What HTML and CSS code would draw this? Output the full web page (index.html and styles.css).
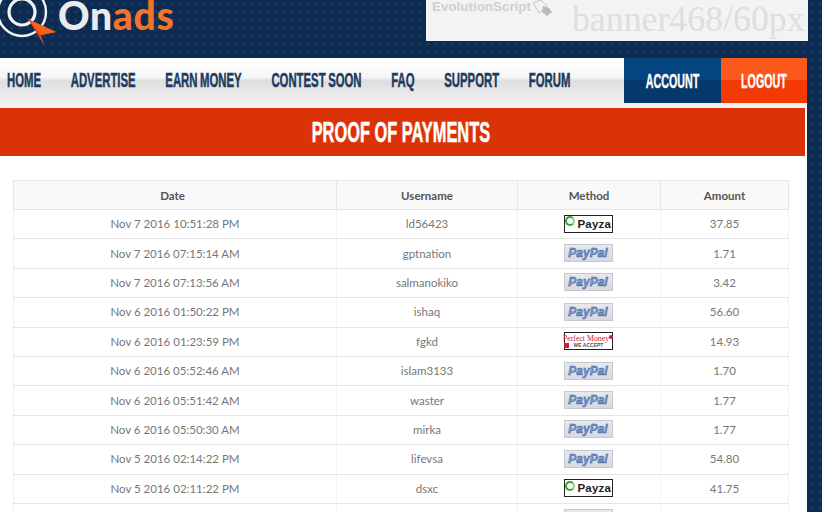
FILE: index.html
```html
<!DOCTYPE html>
<html lang="en">
<head>
<meta charset="utf-8">
<title>Onads - Proof of Payments</title>
<link rel="stylesheet" href="styles.css">
</head>
<body>
<div class="page">
  <header class="top">
    <a class="logo">
      <svg class="logo-mark" width="58" height="46" viewBox="0 0 58 46" aria-hidden="true">
        <circle cx="22" cy="12" r="24" fill="none" stroke="#f1f3f5" stroke-width="2.4"/>
        <circle cx="22" cy="12" r="13" fill="none" stroke="#f1f3f5" stroke-width="3.2"/>
        <path d="M28 19 L56 32 L41 35 L44 45 Z" fill="#e8430f"/>
        <path d="M28 19 L56 32 L41 35 Z" fill="#f8601c"/>
      </svg>
      <span class="logo-text">On<span class="logo-accent">ads</span></span>
    </a>
    <div class="banner">
      <span class="banner-brand">EvolutionScript</span>
      <svg class="banner-icon" width="22" height="18" viewBox="0 0 22 18" aria-hidden="true">
        <path d="M2 3 L10 0 L16 6 L8 13 Z" fill="none" stroke="#c4c4c4" stroke-width="1"/>
        <path d="M12 6 L18 8 L21 12 L16 16 L11 12 Z" fill="#bbbbbb"/>
      </svg>
      <span class="banner-size">banner468/60px</span>
    </div>
  </header>
  <nav class="nav">
    <ul class="nav-links">
      <li>HOME</li>
      <li>ADVERTISE</li>
      <li>EARN MONEY</li>
      <li>CONTEST SOON</li>
      <li>FAQ</li>
      <li>SUPPORT</li>
      <li>FORUM</li>
    </ul>
    <div class="nav-actions">
      <a class="btn btn-account"><span class="squeeze">ACCOUNT</span></a>
      <a class="btn btn-logout"><span class="squeeze">LOGOUT</span></a>
    </div>
  </nav>
  <main class="content">
    <h1 class="title"><span class="squeeze">PROOF OF PAYMENTS</span></h1>
    <div class="table-wrap">
      <table class="pay">
        <colgroup><col class="c1"><col class="c2"><col class="c3"><col class="c4"></colgroup>
        <thead>
          <tr><th class="th-date">Date</th><th>Username</th><th>Method</th><th>Amount</th></tr>
        </thead>
        <tbody>
          <tr><td>Nov 7 2016 10:51:28 PM</td><td>ld56423</td><td><span class="badge payza"><i class="pz-o"></i>Payza</span></td><td>37.85</td></tr>
          <tr><td>Nov 7 2016 07:15:14 AM</td><td>gptnation</td><td><span class="badge paypal">PayPal</span></td><td>1.71</td></tr>
          <tr><td>Nov 7 2016 07:13:56 AM</td><td>salmanokiko</td><td><span class="badge paypal">PayPal</span></td><td>3.42</td></tr>
          <tr><td>Nov 6 2016 01:50:22 PM</td><td>ishaq</td><td><span class="badge paypal">PayPal</span></td><td>56.60</td></tr>
          <tr><td>Nov 6 2016 01:23:59 PM</td><td>fgkd</td><td><span class="badge pm"><span class="pm-name">Perfect Money</span><span class="pm-sub">WE ACCEPT</span></span></td><td>14.93</td></tr>
          <tr><td>Nov 6 2016 05:52:46 AM</td><td>islam3133</td><td><span class="badge paypal">PayPal</span></td><td>1.70</td></tr>
          <tr><td>Nov 6 2016 05:51:42 AM</td><td>waster</td><td><span class="badge paypal">PayPal</span></td><td>1.77</td></tr>
          <tr><td>Nov 6 2016 05:50:30 AM</td><td>mirka</td><td><span class="badge paypal">PayPal</span></td><td>1.77</td></tr>
          <tr><td>Nov 5 2016 02:14:22 PM</td><td>lifevsa</td><td><span class="badge paypal">PayPal</span></td><td>54.80</td></tr>
          <tr><td>Nov 5 2016 02:11:22 PM</td><td>dsxc</td><td><span class="badge payza"><i class="pz-o"></i>Payza</span></td><td>41.75</td></tr>
          <tr><td></td><td></td><td><span class="badge paypal"></span></td><td></td></tr>
        </tbody>
      </table>
    </div>
  </main>
</div>
</body>
</html>
```

FILE: styles.css
```css
html, body {
  margin: 0;
  height: 512px;
  overflow: hidden;
}
body {
  background-color: #0d2b50;
  background-image: radial-gradient(circle at 4px 4px, #15365e 1.6px, transparent 2px);
  background-size: 8px 8px;
  font-family: Lato, "Liberation Sans", sans-serif;
}
.page {
  width: 808px;
  height: 512px;
  overflow: hidden;
}
.top {
  display: flex;
  justify-content: space-between;
  align-items: flex-start;
  height: 58px;
  overflow: hidden;
}
.logo {
  display: flex;
  align-items: flex-start;
  height: 46px;
}
.logo-mark {
  display: block;
}
.logo-text {
  font-family: Lato, sans-serif;
  font-weight: 900;
  font-size: 39px;
  line-height: 30px;
  letter-spacing: 0.7px;
  color: #e9ebed;
}
.logo-accent {
  color: #f4732b;
}
.banner {
  display: flex;
  align-items: flex-start;
  width: 382px;
  height: 41px;
  background: #f3f3f3;
  overflow: hidden;
  box-sizing: border-box;
  padding-left: 6px;
}
.banner-brand {
  font-family: "Liberation Sans", sans-serif;
  font-weight: 700;
  font-size: 13.4px;
  line-height: 14px;
  color: #d0d0d0;
}
.banner-size {
  font-family: "Liberation Serif", serif;
  font-size: 35.8px;
  line-height: 38px;
  color: #dedede;
  margin-left: 19px;
  white-space: nowrap;
}
.nav {
  display: grid;
  grid-template-columns: 624px 183px;
  align-items: start;
  height: 50px;
  width: 807px;
  background: linear-gradient(#ffffff 0, #f6f6f6 38%, #dedede 46%, #e8e8e8 70%, #f3f3f3 100%);
}
.nav-links {
  display: flex;
  gap: 55px;
  margin: 0;
  padding: 0 0 0 13px;
  list-style: none;
  white-space: nowrap;
  transform: scaleX(0.54);
  transform-origin: 0 0;
  font-family: "Liberation Sans", sans-serif;
  font-weight: 700;
  font-size: 21px;
  line-height: 44px;
  word-spacing: -1px;
  -webkit-text-stroke: 0.5px #1d3a60;
  color: #1d3a60;
}
.nav-links li {
  flex: none;
}
.nav-actions {
  display: flex;
}
.btn {
  display: flex;
  justify-content: center;
  height: 45px;
  font-family: "Liberation Sans", sans-serif;
  font-weight: 700;
  font-size: 21px;
  line-height: 45px;
  color: #ffffff;
  white-space: nowrap;
  -webkit-text-stroke: 0.4px #ffffff;
}
.squeeze {
  display: block;
  flex: none;
  transform: scaleX(0.51);
}
.btn-account {
  width: 97px;
  background: linear-gradient(#04447f 0, #04447f 50%, #063a6c 50%, #04386a 100%);
}
.btn-logout {
  width: 86px;
  background: linear-gradient(#fb5a1c 0, #fb5a1c 50%, #f43a04 50%, #f43a04 100%);
}
.content {
  width: 807px;
  height: 404px;
  background: #ffffff;
  overflow: hidden;
}
.title {
  display: flex;
  justify-content: center;
  box-sizing: border-box;
  width: 805px;
  height: 48px;
  margin: 0;
  padding-right: 3px;
  background: #db3307;
  font-family: "Liberation Sans", sans-serif;
  font-weight: 700;
  font-size: 29px;
  line-height: 49px;
  color: #ffffff;
  -webkit-text-stroke: 0.5px #ffffff;
}
.title .squeeze {
  transform: scaleX(0.565);
}
.table-wrap {
  padding: 24px 0 0 13px;
}
.pay {
  width: 775px;
  table-layout: fixed;
  border-collapse: collapse;
  font-size: 11.5px;
  color: #777777;
}
.c1 { width: 323px; }
.c2 { width: 181px; }
.c3 { width: 143px; }
.c4 { width: 128px; }
.pay th, .pay td {
  border: 1px solid #e6e6e6;
  text-align: center;
  padding: 0;
  height: 28px;
  vertical-align: middle;
}
.pay td {
  padding-bottom: 1px;
  height: 27.4px;
  border-left-color: #f2f2f2;
  border-right-color: #f2f2f2;
}
.pay th {
  background: #f9f9f9;
  color: #555555;
  font-weight: 700;
}
.pay .th-date {
  padding-right: 5px;
}
.badge {
  display: inline-flex;
  align-items: center;
  justify-content: center;
  box-sizing: border-box;
  width: 49px;
  height: 18px;
  margin-right: 2px;
  vertical-align: middle;
}
.payza {
  justify-content: flex-start;
  border: 1px solid #222222;
  background: #ffffff;
  color: #222222;
  font-family: "Liberation Sans", sans-serif;
  font-weight: 700;
  font-size: 11.5px;
  letter-spacing: 0.2px;
}
.pz-o {
  flex: none;
  width: 6px;
  height: 6px;
  margin: -5px 3px 0 0;
  border: 2px solid #3aa335;
  border-right-color: #8fd08a;
  border-radius: 50%;
}
.paypal {
  border: 1px solid #c5c8cf;
  background: linear-gradient(#e6e8ec, #d6d9e0);
  color: #7f9fd6;
  font-family: "Liberation Sans", sans-serif;
  font-weight: 700;
  font-style: italic;
  font-size: 12px;
  -webkit-text-stroke: 0.4px #274a86;
}
.pm {
  flex-direction: column;
  border: 1px solid #222222;
  background: #ffffff;
  font-family: "Liberation Serif", serif;
  line-height: 1;
}
.pm-name {
  display: flex;
  align-items: flex-start;
  color: #c8202c;
  font-size: 7.8px;
  white-space: nowrap;
}
.pm-name::after {
  content: "";
  flex: none;
  width: 4px;
  height: 4px;
  border-radius: 50%;
  background: #c8202c;
}
.pm-sub {
  display: flex;
  align-items: center;
  gap: 5px;
  color: #555555;
  font-family: "Liberation Sans", sans-serif;
  font-weight: 700;
  font-size: 5px;
  margin-left: -9px;
}
.pm-sub::before {
  content: "";
  width: 5px;
  height: 5px;
  background: #c8202c;
}
```
